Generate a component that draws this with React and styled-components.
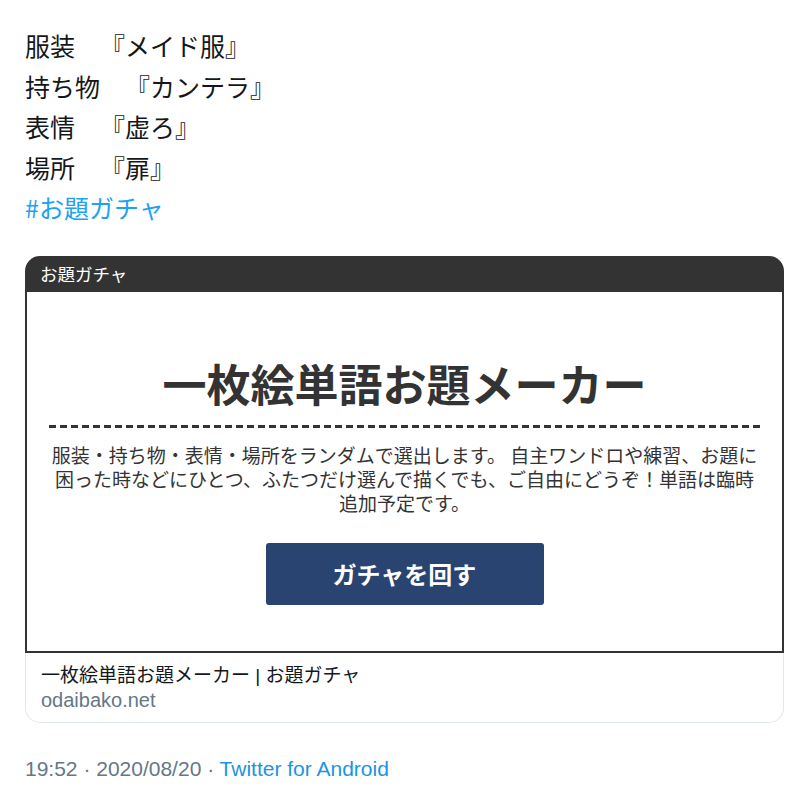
import React from "react";
import styled, { createGlobalStyle } from "styled-components";

const Global = createGlobalStyle`
  html, body { margin: 0; padding: 0; background: #ffffff; }
  body { font-family: "Liberation Sans", "Noto Sans CJK JP", sans-serif; color: #14171a; }
`;

const Page = styled.div`
  padding: 25px 16px 0 25px;
`;

const TweetText = styled.div`
  font-family: "Noto Sans CJK JP", sans-serif;
  font-size: 25px;
  line-height: 40.5px;
  color: #14171a;
  text-spacing-trim: space-all;
`;

const Line = styled.div``;

const Hashtag = styled.span`
  color: #1da1f2;
`;

const Card = styled.div`
  margin-top: 28px;
  width: 759px;
`;

const EmbedHeader = styled.div`
  height: 36px;
  background: #333333;
  border-radius: 15px 15px 0 0;
  color: #ffffff;
  font-family: "Noto Sans CJK JP", sans-serif;
  font-size: 17.5px;
  line-height: 36px;
  padding-left: 15px;
`;

const EmbedBody = styled.div`
  background: #ffffff;
  border: 2px solid #333333;
  border-top: 0;
  padding: 63px 20px 46px;
  display: flex;
  flex-direction: column;
  align-items: stretch;
  font-family: "Noto Sans CJK JP", sans-serif;
  color: #333333;
`;

const Title = styled.h1`
  margin: 0;
  font-size: 44px;
  line-height: 56px;
  font-weight: 700;
  text-align: center;
  color: #333333;
`;

const Divider = styled.div`
  margin: 14px 0 0 2px;
  height: 3px;
  background: repeating-linear-gradient(
    to right,
    #333333 0,
    #333333 7px,
    transparent 7px,
    transparent 11px
  );
`;

const Description = styled.p`
  margin: 15px 0 0;
  font-size: 19px;
  line-height: 24px;
  text-align: center;
  color: #333333;
`;

const GachaButton = styled.button`
  align-self: center;
  margin-top: 28px;
  width: 278px;
  height: 62px;
  border: 0;
  border-radius: 3px;
  background: #294470;
  color: #ffffff;
  font-family: "Noto Sans CJK JP", sans-serif;
  font-size: 24px;
  font-weight: 700;
  cursor: pointer;
`;

const Footer = styled.div`
  border: 1px solid #e1e8ed;
  border-top: 0;
  border-radius: 0 0 15px 15px;
  padding: 11px 15px 10px;
  font-size: 19px;
  line-height: 24px;
`;

const FooterTitle = styled.div`
  color: #14171a;
  font-family: "Liberation Sans", "Noto Sans CJK JP", sans-serif;
`;

const Domain = styled.div`
  color: #657786;
  font-family: "Liberation Sans", sans-serif;
  font-size: 20px;
`;

const Meta = styled.div`
  margin-top: 34px;
  font-family: "Liberation Sans", sans-serif;
  font-size: 21px;
  line-height: 24px;
  color: #657786;
`;

const Source = styled.span`
  color: #1b95e0;
`;

export default function App() {
  return (
    <>
      <Global />
      <Page>
        <TweetText>
          <Line>服装　『メイド服』</Line>
          <Line>持ち物　『カンテラ』</Line>
          <Line>表情　『虚ろ』</Line>
          <Line>場所　『扉』</Line>
          <Line>
            <Hashtag>#お題ガチャ</Hashtag>
          </Line>
        </TweetText>
        <Card>
          <EmbedHeader>お題ガチャ</EmbedHeader>
          <EmbedBody>
            <Title>一枚絵単語お題メーカー</Title>
            <Divider />
            <Description>
              服装・持ち物・表情・場所をランダムで選出します。 自主ワンドロや練習、お題に困った時などにひとつ、ふたつだけ選んで描くでも、ご自由にどうぞ！単語は臨時追加予定です。
            </Description>
            <GachaButton>ガチャを回す</GachaButton>
          </EmbedBody>
          <Footer>
            <FooterTitle>一枚絵単語お題メーカー | お題ガチャ</FooterTitle>
            <Domain>odaibako.net</Domain>
          </Footer>
        </Card>
        <Meta>
          19:52 · 2020/08/20 · <Source>Twitter for Android</Source>
        </Meta>
      </Page>
    </>
  );
}
